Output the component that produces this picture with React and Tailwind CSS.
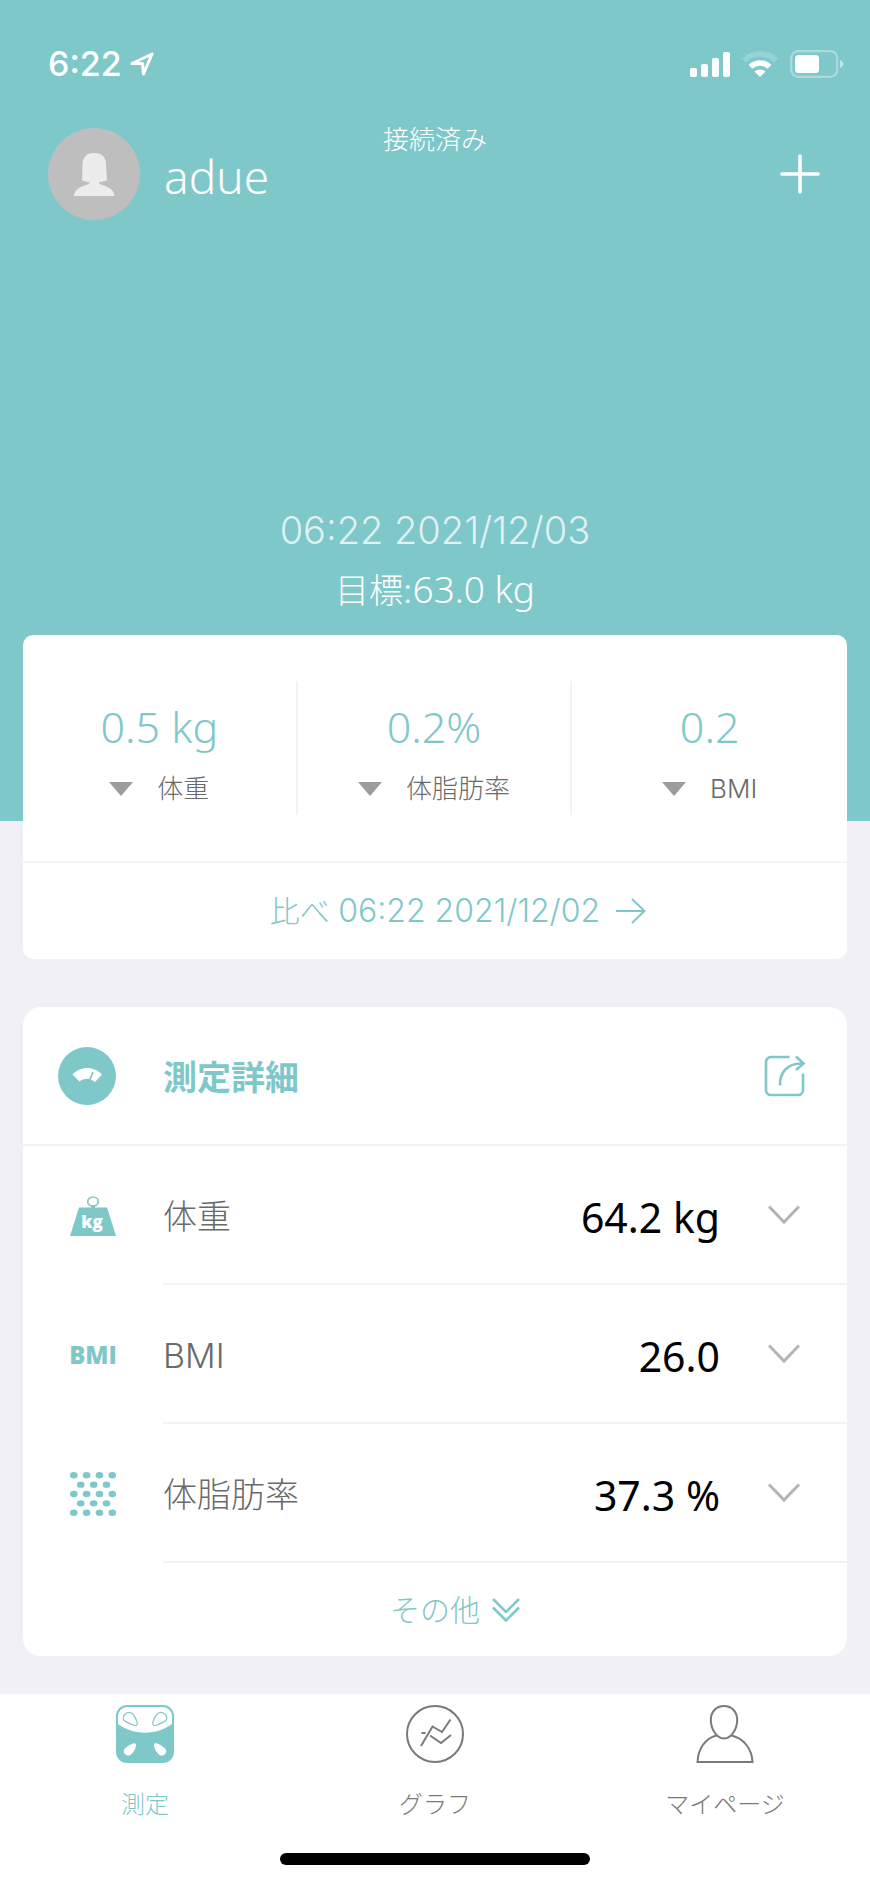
import React from 'react'

const LocationIcon = () => (
  <svg viewBox="0 0 24 24" className="h-6 w-6" fill="none" stroke="currentColor" strokeWidth="3" strokeLinejoin="round" aria-hidden="true">
    <path d="M22 2 2 11.5 12.5 11.5 13.5 22Z" />
  </svg>
)

const SignalIcon = () => (
  <svg viewBox="0 0 40 26" className="h-[26px] w-10" fill="currentColor" aria-hidden="true">
    <rect x="0" y="17" width="7" height="9" rx="2" />
    <rect x="11" y="13" width="7" height="13" rx="2" />
    <rect x="22" y="7" width="7" height="19" rx="2" />
    <rect x="33" y="1" width="7" height="25" rx="2" />
  </svg>
)

const WifiIcon = () => (
  <svg viewBox="0 0 36 26" className="h-[26px] w-9" aria-hidden="true">
    <path d="M2 9.5a23 23 0 0 1 32 0" fill="none" stroke="#fff" strokeOpacity="0.2" strokeWidth="5.5" />
    <path d="M8.5 15.8a13.8 13.8 0 0 1 19 0" fill="none" stroke="#fff" strokeWidth="5.5" />
    <path d="M18 26l-5.5-5.4a8 8 0 0 1 11 0z" fill="#fff" />
  </svg>
)

const BatteryIcon = () => (
  <svg viewBox="0 0 54 28" className="h-7 w-[54px]" aria-hidden="true">
    <rect x="1.2" y="1.2" width="46" height="25.6" rx="7" fill="none" stroke="#fff" strokeOpacity="0.35" strokeWidth="2.2" />
    <rect x="5" y="5" width="24" height="18" rx="3.5" fill="#fff" />
    <path d="M50 10c2.2.8 3.5 2.3 3.5 4s-1.3 3.2-3.5 4z" fill="#fff" fillOpacity="0.5" />
  </svg>
)

const AvatarIcon = () => (
  <svg viewBox="0 0 92 92" className="h-[92px] w-[92px]" aria-hidden="true">
    <circle cx="46" cy="46" r="46" fill="#bebebe" />
    <path d="M46 25c-8 0-11.5 4.5-11.5 12L34 52c2.500 1.500 5 2 7.500 2v1c-2 3-15 3-15.500 13h40.500C66 58 53 58 51 55v-1c2.500 0 5-.5 8-2l-1-15c0-7.500-3.500-12-12-12z" fill="#ececec" />
  </svg>
)

const ScaleDialIcon = () => (
  <svg viewBox="0 0 58 58" className="h-[58px] w-[58px]" aria-hidden="true">
    <circle cx="29" cy="29" r="29" fill="#7fc8ca" />
    <path d="M14.5 27.5c8-8.800 21.500-8.800 29.500 0L37 35c-1.500-1.300-3-2-4.500-2.500-3.500-1.300-7.500-.8-11 2z" fill="#fff" />
    <path d="M31.500 33.500l3.500-8.500" stroke="#7fc8ca" strokeWidth="1.8" fill="none" />
  </svg>
)

const ShareIcon = () => (
  <svg viewBox="0 0 42 42" className="h-[42px] w-[42px]" fill="none" stroke="currentColor" strokeWidth="2.6" aria-hidden="true">
    <path d="M25.500 2H7a5 5 0 0 0-5 5v28a5 5 0 0 0 5 5h27a5 5 0 0 0 5-5V18.500" />
    <path d="M16 30.500C15.500 17 24 8 38.500 8.500M32 1.500l7.500 7-7.500 6.500" />
  </svg>
)

const WeightIcon = () => (
  <svg viewBox="0 0 46 40" className="h-10 w-[46px]" aria-hidden="true">
    <ellipse cx="23" cy="5.500" rx="5.300" ry="4.500" fill="none" stroke="#7fc8ca" strokeWidth="1.7" />
    <path d="M9 11.500h12v-2h4v2h12L46 40H0z" fill="#7fc8ca" />
    <text x="22" y="32" textAnchor="middle" fill="#fff" className="font-['Open_Sans'] text-[17px] font-extrabold">kg</text>
  </svg>
)

const BmiIcon = () => (
  <span aria-hidden="true" className="font-['Open_Sans'] text-[24px] leading-6 font-extrabold text-[#7fc8ca]">BMI</span>
)

const FatIcon = () => (
  <svg viewBox="0 0 46 44" className="h-11 w-[46px]" fill="#7fc8ca" aria-hidden="true">
    {[0, 1, 2, 3, 4].map((row) =>
      (row % 2 ? [10.7, 23.7, 36.5] : [3.8, 16.6, 29.5, 42.3]).map((x) => (
        <ellipse key={`${row}-${x}`} cx={x} cy={3.3 + row * 9.35} rx="3.8" ry="3.2" />
      ))
    )}
  </svg>
)

const ChevronIcon = () => (
  <svg viewBox="0 0 32 20" className="h-5 w-8" fill="none" stroke="#b4b4b4" strokeWidth="3" aria-hidden="true">
    <path d="M1 1.500 16 17 31 1.500" />
  </svg>
)

const ScaleTabIcon = () => (
  <svg viewBox="0 0 58 58" className="h-[58px] w-[58px]" aria-hidden="true">
    <rect width="58" height="58" rx="11" fill="#7fc8ca" />
    <path d="M2 19V11a9 9 0 0 1 9-9h36a9 9 0 0 1 9 9v8c-15 11.500-39 11.500-54 0z" fill="#fff" />
    <g fill="none" stroke="#7fc8ca" strokeWidth="1.2">
      <path d="M7.500 14.500c-1-4.500 3.500-8.500 8-6.500 2.500 1 5.500 8 5.800 10 .3 2-1.800 3-3.500 2.200-3-1.200-9.700-3.400-10.300-5.700z" />
      <path d="M50.500 14.500c1-4.500-3.500-8.500-8-6.500-2.500 1-5.500 8-5.800 10-.3 2 1.800 3 3.500 2.200 3-1.200 9.700-3.400 10.300-5.700z" />
    </g>
    <path d="M8 45c.5-2 6-5.500 9.500-6.700 1.700-.5 2.900.8 2.500 2.700-.8 3.500-3.500 8-6 9.200-3.500 1.200-7-1.500-6-5.200z" fill="#fff" />
    <path d="M50 45c-.5-2-6-5.500-9.500-6.700-1.700-.5-2.900.8-2.500 2.700.8 3.500 3.500 8 6 9.200 3.500 1.200 7-1.500 6-5.200z" fill="#fff" />
  </svg>
)

const GraphTabIcon = () => (
  <svg viewBox="0 0 58 58" className="h-[58px] w-[58px]" fill="none" stroke="currentColor" strokeWidth="2" aria-hidden="true">
    <circle cx="29" cy="29" r="28" />
    <path d="M15 41 26.500 21.500 36 27 44.500 14.500M15.500 28h4M24 30.500 35 38 45 30" />
  </svg>
)

const PersonTabIcon = () => (
  <svg viewBox="0 0 58 58" className="h-[58px] w-[58px]" fill="none" stroke="currentColor" strokeWidth="2" aria-hidden="true">
    <path d="M28 1c-8 0-13.200 6-13.200 14S20 33.500 28 33.500 41.200 23 41.200 15 36 1 28 1z" />
    <path d="M20.500 30.500C9 33.500 2 44 1.500 57h55C56 44 48 33.500 35.500 30.500" />
  </svg>
)

const changes = [
  { value: '0.5 kg', label: '体重' },
  { value: '0.2%', label: '体脂肪率' },
  { value: '0.2', label: 'BMI' }
]

const measurements = [
  { icon: WeightIcon, label: '体重', value: '64.2 kg' },
  { icon: BmiIcon, label: 'BMI', value: '26.0' },
  { icon: FatIcon, label: '体脂肪率', value: '37.3 %' }
]

const tabs = [
  { icon: ScaleTabIcon, label: '測定', active: true },
  { icon: GraphTabIcon, label: 'グラフ' },
  { icon: PersonTabIcon, label: 'マイページ' }
]

const App = () => {
  return (
    <div className="min-h-screen flex flex-col bg-[#f0f0f6] font-['Inter','Noto_Sans_CJK_JP',sans-serif] font-light">
      <header className="bg-[#7fc8ca] text-white pb-[186px]">
        {/* Status bar */}
        <div className="flex items-center justify-between pt-11 pl-12 pr-[26px]">
          <div className="flex items-center gap-2 text-[34px] leading-10 font-medium">
            6:22
            <LocationIcon />
          </div>
          <div className="flex items-center gap-3">
            <SignalIcon />
            <WifiIcon />
            <BatteryIcon />
          </div>
        </div>

        {/* User row */}
        <div className="grid grid-cols-[1fr_auto_1fr] items-center mt-11 px-12">
          <div className="flex items-center gap-6">
            <AvatarIcon />
            <h1 className="pt-1 font-['Noto_Sans',sans-serif] text-[46px] leading-[52px]">adue</h1>
          </div>
          <p className="self-start text-[26px] leading-6">接続済み</p>
          <button type="button" aria-label="追加" className="justify-self-end">
            <svg viewBox="0 0 42 40" className="h-10 w-[42px]" stroke="currentColor" strokeWidth="3.6" strokeLinecap="round" aria-hidden="true">
              <path d="M20 2v36M2 20h36" />
            </svg>
          </button>
        </div>

        <div className="mt-[284px] text-center">
          <p className="text-[38px] leading-[52px] text-white/75">06:22 2021/12/03</p>
          <p className="flex h-[52px] items-baseline justify-center mt-[7px] mb-5 text-[34px] leading-[52px]">
            目標:<span className="font-['Noto_Sans',sans-serif] text-[37px]">63.0 kg</span>
          </p>
        </div>
      </header>

      <main className="px-[23px] pb-[38px]">
        {/* Change since the last measurement */}
        <section className="relative -mt-[186px] rounded-[10px] bg-white">
          <ul className="grid grid-cols-3 py-[46px] divide-x-2 divide-[#f3f3f6]">
            {changes.map((item) => (
              <li key={item.label} className="flex flex-col items-center pt-5 pb-1.5">
                <span className="font-['Noto_Sans',sans-serif] text-[43px] leading-[52px] text-[#7fc8ca]">{item.value}</span>
                <span className="mt-4 flex items-center gap-6 text-[26px] leading-10 text-[#6a6a6a]">
                  <svg viewBox="0 0 24 14" className="h-3.5 w-6" fill="#9c9c9c" aria-hidden="true">
                    <path d="M0 0h24L12 14z" />
                  </svg>
                  {item.label}
                </span>
              </li>
            ))}
          </ul>
          <a href="#compare" className="grid grid-cols-[1fr_auto_1fr] items-center gap-4 h-[98px] border-t-2 border-[#f5f5f8] text-[#7fc8ca]">
            <span className="col-start-2 text-[30px] leading-10">
              比べ <span className="text-[32px]">06:22 2021/12/02</span>
            </span>
            <svg viewBox="0 0 30 26" className="h-[26px] w-[30px]" fill="none" stroke="currentColor" strokeWidth="2" aria-hidden="true">
              <path d="M0 13h28M16 1l12.500 12L16 25" />
            </svg>
          </a>
        </section>

        {/* Measurement details */}
        <section className="mt-12 rounded-[18px] bg-white">
          <div className="flex items-center h-[139px] pl-[35px] pr-[41px] border-b-2 border-[#f3f3f6] text-[#7fc8ca]">
            <div className="w-[105px]"><ScaleDialIcon /></div>
            <h2 className="flex-1 pt-1 text-[34px] leading-[52px] font-bold">測定詳細</h2>
            <button type="button" aria-label="共有"><ShareIcon /></button>
          </div>
          <ul>
            {measurements.map((item) => {
              const Icon = item.icon
              return (
                <li key={item.label} className="flex">
                  <div className="flex w-[140px] items-center justify-center">
                    <Icon />
                  </div>
                  <div className="flex flex-1 items-center h-[139px] pr-[47px] border-b-2 border-[#f3f3f6]">
                    <span className="flex-1 pt-1 text-[34px] leading-[52px] text-[#6a6a6a]">{item.label}</span>
                    <span className="pt-1 font-['Noto_Sans',sans-serif] text-[41px] leading-[52px] font-normal text-black">{item.value}</span>
                    <button type="button" aria-label={`${item.label}の詳細`} className="ml-12"><ChevronIcon /></button>
                  </div>
                </li>
              )
            })}
          </ul>
          <button type="button" className="grid w-full grid-cols-[1fr_auto_1fr] items-center gap-3 h-[93px] text-[#7fc8ca]">
            <span className="col-start-2 text-[30px] leading-10">その他</span>
            <svg viewBox="0 0 28 24" className="h-6 w-7" fill="none" stroke="currentColor" strokeWidth="2.6" aria-hidden="true">
              <path d="M1 1 14 14 27 1M1 9.500l13 13 13-13" />
            </svg>
          </button>
        </section>
      </main>

      <nav className="mt-auto bg-white">
        <div className="grid grid-cols-3 pt-[11px]">
          {tabs.map((tab) => {
            const Icon = tab.icon
            return (
              <a key={tab.label} href="#" className={`flex flex-col items-center ${tab.active ? 'text-[#7fc8ca]' : 'text-[#7a7a7a]'}`}>
                <Icon />
                <span className="mt-[22px] text-[24px] leading-10">{tab.label}</span>
              </a>
            )
          })}
        </div>
        <div className="mx-auto mt-7 mb-[19px] h-3 w-[310px] rounded-full bg-black"></div>
      </nav>
    </div>
  )
}

export default App
